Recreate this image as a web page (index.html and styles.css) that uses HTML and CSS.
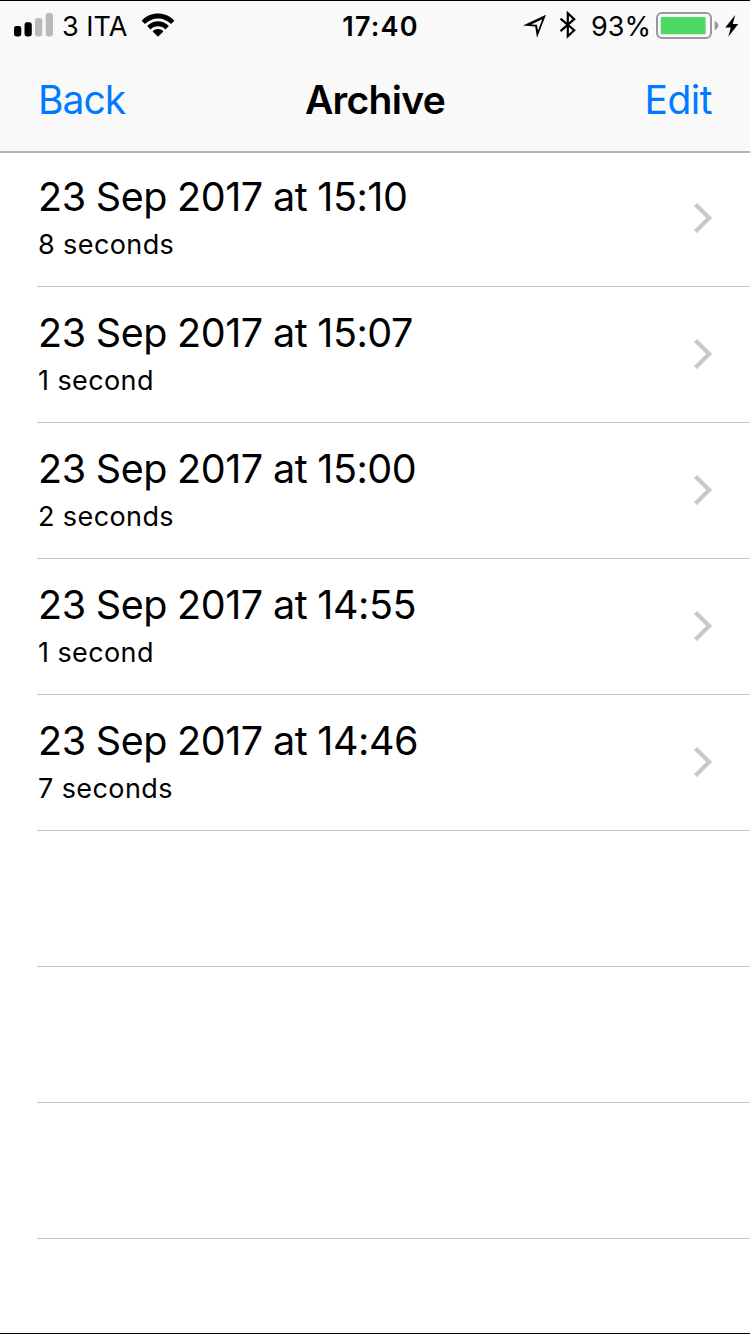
FILE: index.html
```html
<!DOCTYPE html>
<html lang="en">
<head>
<meta charset="utf-8">
<title>Archive</title>
<link rel="stylesheet" href="styles.css">
</head>
<body>
<div class="screen">
  <header class="header">
    <div class="status">
      <div class="status-left">
        <svg class="signal" width="40" height="24" viewBox="0 0 40 24">
          <rect x="0" y="13" width="7.3" height="10.5" rx="2.4"/>
          <rect x="10.5" y="9.3" width="7.3" height="14.2" rx="2.4"/>
          <rect class="dim" x="21" y="5" width="7.3" height="18.5" rx="2.4"/>
          <rect class="dim" x="31.7" y="0" width="7.3" height="23.5" rx="2.4"/>
        </svg>
        <span class="carrier">3 ITA</span>
        <svg class="wifi" width="34" height="24" viewBox="0 0 34 24">
          <path d="M0.6 7.7C9.5-1.9 24.5-1.9 33.4 7.7L30 11C23 3.5 11 3.5 4 11Z"/>
          <path d="M6.1 13.1C12 6.7 22 6.7 27.9 13.1L24.5 16.4C20.5 12.1 13.5 12.1 9.5 16.4Z"/>
          <path d="M11.6 18.5C14.5 15.3 19.5 15.3 22.4 18.5L17 23.8Z"/>
        </svg>
      </div>
      <time class="clock">17:40</time>
      <div class="status-right">
        <svg class="location" width="24" height="24" viewBox="0 0 24 24">
          <path fill-rule="evenodd" d="M0 11.6L23 0.8L14 23.8L12.2 12.4ZM8.2 10.4L14 10.7L15 16.8L19.2 5.2Z"/>
        </svg>
        <svg class="bluetooth" width="18" height="28" viewBox="0 0 18 28">
          <path d="M1.5 7.7L15.2 19.2L8.8 25.2V2.2L15.2 8.2L1.5 20.2"/>
        </svg>
        <span class="percent">93%</span>
        <svg class="battery" width="63" height="28" viewBox="0 0 63 28">
          <rect class="shell" x="1" y="1" width="54" height="25" rx="5"/>
          <rect class="charge" x="4.8" y="5" width="44.8" height="17.3" rx="0.8"/>
          <path class="cap" d="M58.6 9C63.6 10.7 63.6 16.5 58.6 18.2Z"/>
        </svg>
        <svg class="bolt" width="14" height="24" viewBox="0 0 14 24">
          <path d="M10.2 1L0.3 13.6H5.8L3.3 22.8L13.3 10.1H7.8Z"/>
        </svg>
      </div>
    </div>
    <nav class="nav">
      <a class="action">Back</a>
      <h1 class="title">Archive</h1>
      <a class="action edit">Edit</a>
    </nav>
  </header>
  <ul class="list">
    <li class="row"><div><div class="date">23 Sep 2017 at 15:10</div><div class="length">8 seconds</div></div><svg class="chevron" width="20" height="32" viewBox="0 0 20 32"><path d="M2.5 2.5L16.2 16L2.5 29.5"/></svg></li>
    <li class="row"><div><div class="date">23 Sep 2017 at 15:07</div><div class="length">1 second</div></div><svg class="chevron" width="20" height="32" viewBox="0 0 20 32"><path d="M2.5 2.5L16.2 16L2.5 29.5"/></svg></li>
    <li class="row"><div><div class="date">23 Sep 2017 at 15:00</div><div class="length">2 seconds</div></div><svg class="chevron" width="20" height="32" viewBox="0 0 20 32"><path d="M2.5 2.5L16.2 16L2.5 29.5"/></svg></li>
    <li class="row"><div><div class="date">23 Sep 2017 at 14:55</div><div class="length">1 second</div></div><svg class="chevron" width="20" height="32" viewBox="0 0 20 32"><path d="M2.5 2.5L16.2 16L2.5 29.5"/></svg></li>
    <li class="row"><div><div class="date">23 Sep 2017 at 14:46</div><div class="length">7 seconds</div></div><svg class="chevron" width="20" height="32" viewBox="0 0 20 32"><path d="M2.5 2.5L16.2 16L2.5 29.5"/></svg></li>
    <li class="row"></li>
    <li class="row"></li>
    <li class="row"></li>
  </ul>
</div>
</body>
</html>
```
FILE: styles.css
```css
* {
  box-sizing: border-box;
}

body {
  margin: 0;
  background: #fff;
  color: #000;
  font-family: Inter, "Liberation Sans", sans-serif;
}

.screen {
  height: 1334px;
  overflow: hidden;
  border-top: 1px solid #000;
  border-bottom: 1px solid #000;
}

.header {
  height: 150px;
  background: #f9f9f9;
  box-shadow: 0 2px 0 #b2b2b2;
}

.status {
  display: grid;
  grid-template-columns: 1fr auto 1fr;
  align-items: center;
  height: 49px;
  padding: 0 11px 0 14px;
  font-size: 27px;
  line-height: 32px;
}

.status-left,
.status-right {
  display: flex;
  align-items: center;
}

.signal,
.wifi {
  margin-bottom: 1px;
}

.status-right {
  justify-content: flex-end;
}

.carrier {
  width: 66px;
  margin: 0 13px 0 8px;
  padding-top: 2px;
  white-space: nowrap;
}

.clock {
  margin-left: 8px;
  padding-top: 2px;
  font-weight: 600;
  letter-spacing: 1.2px;
}

.dim {
  fill: #bababa;
}

.location {
  margin-right: 12px;
}

.bluetooth {
  margin: 0 14px 1px 0;
  fill: none;
  stroke: #000;
  stroke-width: 2.2;
}

.percent {
  width: 58px;
  margin-right: 7px;
  padding-top: 2px;
  white-space: nowrap;
}

.battery {
  margin-right: 6px;
}

.shell {
  fill: none;
  stroke: #999;
  stroke-width: 2;
}

.charge {
  fill: #4cd964;
}

.cap {
  fill: #999;
}

.nav {
  display: grid;
  grid-template-columns: 1fr auto 1fr;
  align-items: center;
  height: 99px;
  padding: 0 38px;
  font-size: 39px;
  line-height: 48px;
}

.title {
  margin: 0;
  font-size: 39px;
  font-weight: 600;
  letter-spacing: -0.7px;
}

.action {
  color: #007aff;
  letter-spacing: -1px;
}

.edit {
  text-align: right;
  letter-spacing: -0.5px;
}

.list {
  margin: 0;
  padding: 0 0 0 37px;
  list-style: none;
}

.row {
  display: flex;
  align-items: center;
  justify-content: space-between;
  height: 136px;
  padding: 0 37px 1px 1px;
  border-bottom: 1px solid #c8c7cc;
}

.date {
  font-size: 39.5px;
  line-height: 46px;
  letter-spacing: -0.45px;
  word-spacing: -0.5px;
}

.length {
  margin-top: 7px;
  font-size: 27px;
  line-height: 36px;
  letter-spacing: 0.4px;
}

.chevron {
  fill: none;
  stroke: #c7c7cc;
  stroke-width: 4.2;
}
```
